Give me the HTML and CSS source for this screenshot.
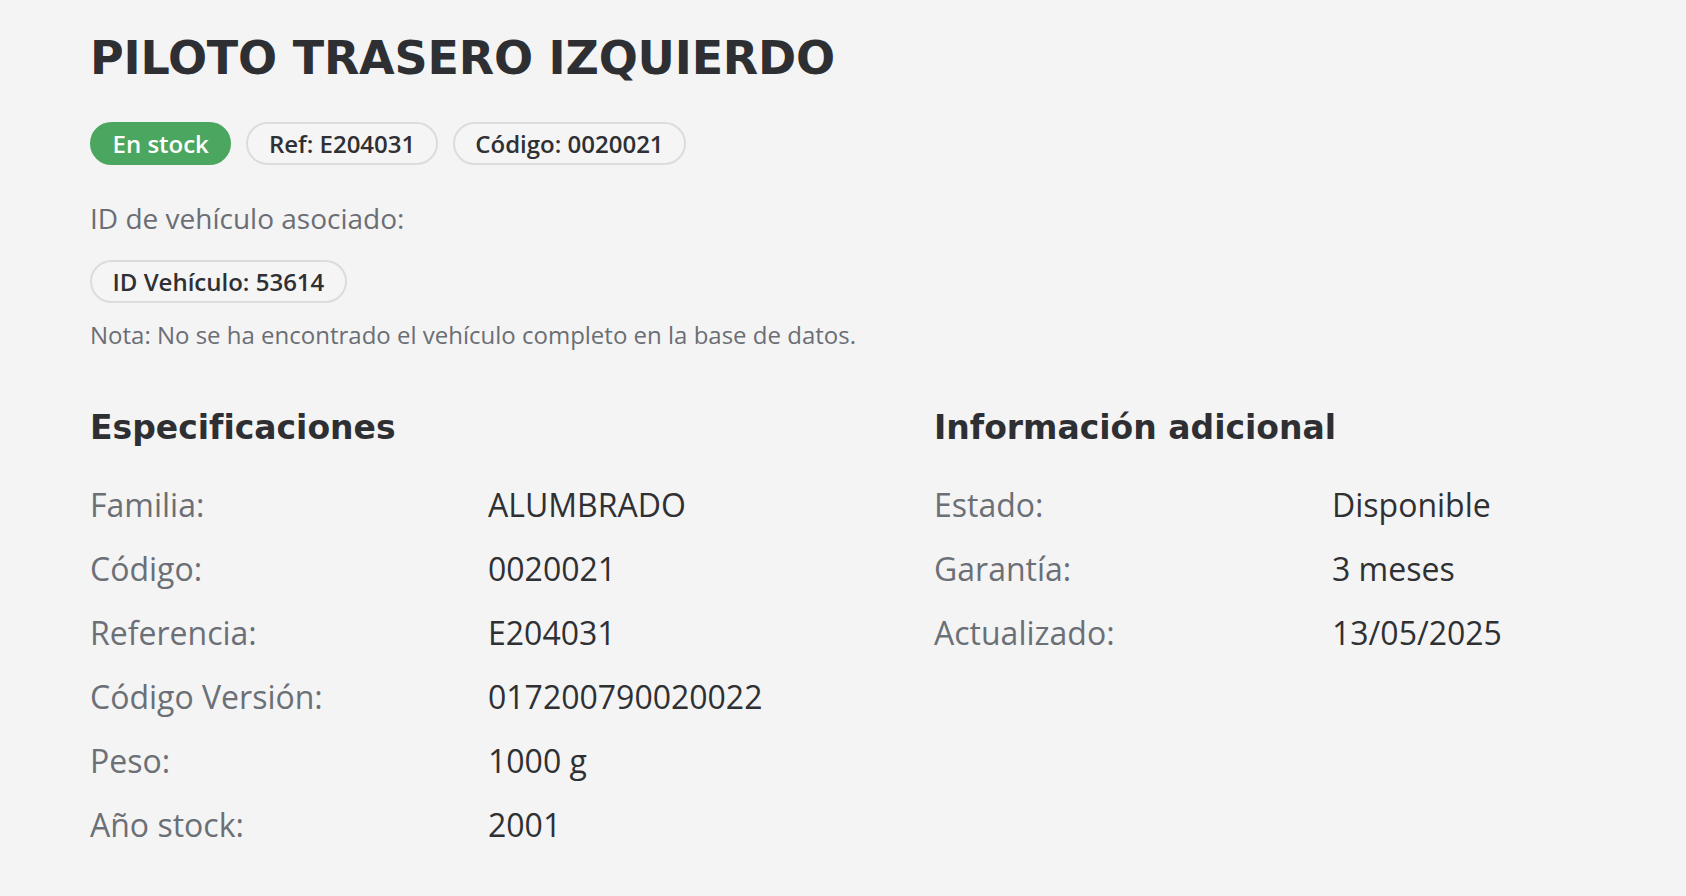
FILE: index.html
```html
<!DOCTYPE html>
<html lang="es">
<head>
<meta charset="utf-8">
<title>Piloto trasero izquierdo</title>
<link rel="stylesheet" href="styles.css">
</head>
<body>
<main class="page">
  <h1 class="title">PILOTO TRASERO IZQUIERDO</h1>
  <div class="badges badges-top">
    <span class="badge badge-success">En stock</span>
    <span class="badge">Ref: E204031</span>
    <span class="badge">Código: 0020021</span>
  </div>
  <p class="vehicle-label">ID de vehículo asociado:</p>
  <div class="badges badges-vehicle">
    <span class="badge">ID Vehículo: 53614</span>
  </div>
  <p class="note">Nota: No se ha encontrado el vehículo completo en la base de datos.</p>

  <div class="sections">
    <section class="section">
      <h2 class="section-title">Especificaciones</h2>
      <dl class="spec-list">
        <div class="spec-row"><dt>Familia:</dt><dd>ALUMBRADO</dd></div>
        <div class="spec-row"><dt>Código:</dt><dd>0020021</dd></div>
        <div class="spec-row"><dt>Referencia:</dt><dd>E204031</dd></div>
        <div class="spec-row"><dt>Código Versión:</dt><dd>017200790020022</dd></div>
        <div class="spec-row"><dt>Peso:</dt><dd>1000 g</dd></div>
        <div class="spec-row"><dt>Año stock:</dt><dd>2001</dd></div>
      </dl>
    </section>
    <section class="section">
      <h2 class="section-title">Información adicional</h2>
      <dl class="spec-list">
        <div class="spec-row"><dt>Estado:</dt><dd>Disponible</dd></div>
        <div class="spec-row"><dt>Garantía:</dt><dd>3 meses</dd></div>
        <div class="spec-row"><dt>Actualizado:</dt><dd>13/05/2025</dd></div>
      </dl>
    </section>
  </div>
</main>
</body>
</html>
```
FILE: styles.css
```css
html, body {
  margin: 0;
  padding: 0;
  background: #f4f4f4;
}

body {
  font-family: "Open Sans", "Noto Sans", sans-serif;
  color: #2f3033;
}

.page {
  padding: 31px 0 0 90px;
  box-sizing: border-box;
  min-height: 896px;
}

.title {
  margin: 0;
  font-family: "DejaVu Sans", sans-serif;
  font-weight: 700;
  font-size: 46px;
  line-height: 54px;
  color: #2e2f33;
  letter-spacing: -0.2px;
}

.badges {
  display: flex;
  gap: 15px;
  align-items: center;
}

.badges-top {
  margin-top: 37px;
}

.badges-vehicle {
  margin-top: 23px;
}

.badge {
  display: inline-block;
  font-size: 24px;
  font-weight: 600;
  line-height: 32px;
  padding: 3.5px 20.5px;
  border: 2px solid #dcdcdc;
  border-radius: 999px;
  color: #2f3033;
  background: #f5f5f5;
}

.badge-success {
  background: #4ba65f;
  border-color: #4ba65f;
  color: #ffffff;
}

.vehicle-label {
  margin: 34px 0 0;
  font-size: 28px;
  line-height: 38px;
  color: #6b6e75;
}

.note {
  margin: 15px 0 0;
  font-size: 24px;
  line-height: 33px;
  color: #6b6e75;
}

.sections {
  display: grid;
  grid-template-columns: 844px 1fr;
  margin-top: 58px;
}

.section-title {
  margin: 0;
  font-family: "DejaVu Sans", sans-serif;
  font-weight: 700;
  font-size: 33px;
  line-height: 38px;
  color: #2e2f33;
}

.spec-list {
  margin: 26px 0 0;
}

.spec-row {
  display: grid;
  grid-template-columns: 398px 1fr;
  font-size: 32px;
  line-height: 64px;
}

.spec-row dt {
  color: #6b6f76;
}

.spec-row dd {
  margin: 0;
  color: #2f3033;
}
```
